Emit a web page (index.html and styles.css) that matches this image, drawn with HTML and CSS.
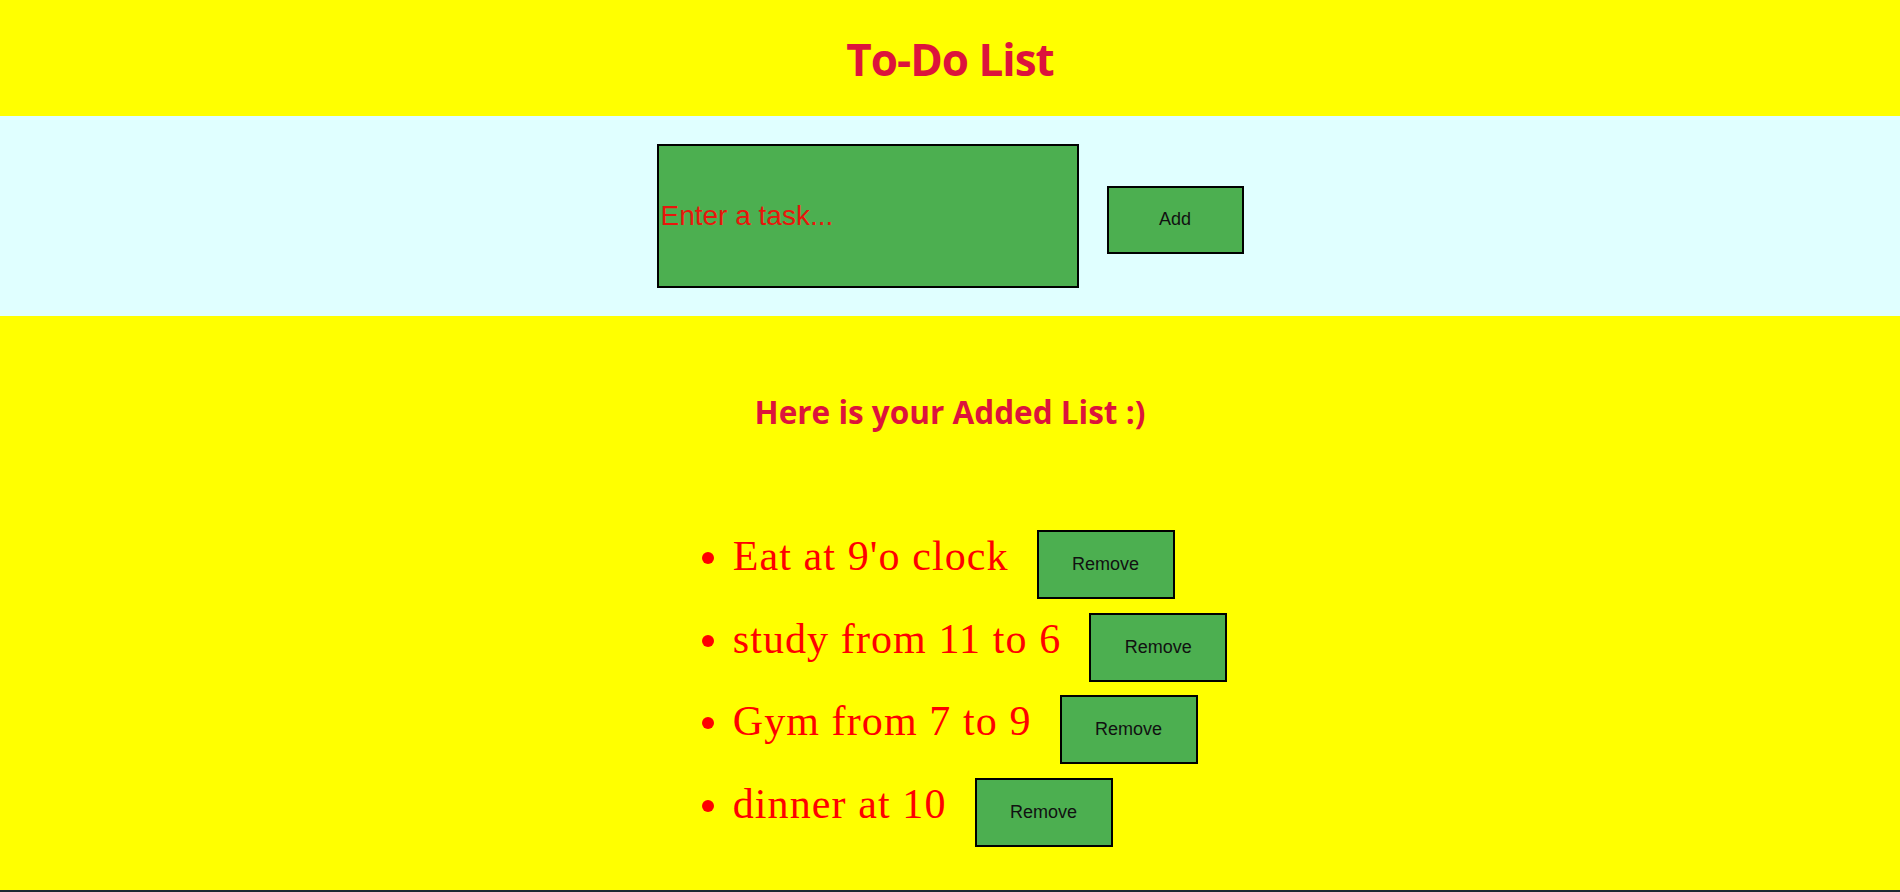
FILE: index.html
```html
<!DOCTYPE html>
<html lang="en">
<head>
<meta charset="utf-8">
<title>To-Do List</title>
<link rel="stylesheet" href="styles.css">
</head>
<body>
<header class="top">
  <h1 class="title">To-Do List</h1>
</header>
<section class="entry">
  <input class="task-input" type="text" placeholder="Enter a task...">
  <button class="btn">Add</button>
</section>
<main class="list-area">
  <h2 class="list-title">Here is your Added List :)</h2>
  <ul class="tasks">
    <li class="task"><span class="task-text">Eat at 9'o clock</span><button class="btn btn-remove">Remove</button></li>
    <li class="task"><span class="task-text">study from 11 to 6</span><button class="btn btn-remove">Remove</button></li>
    <li class="task"><span class="task-text">Gym from 7 to 9</span><button class="btn btn-remove">Remove</button></li>
    <li class="task"><span class="task-text">dinner at 10</span><button class="btn btn-remove">Remove</button></li>
  </ul>
</main>
</body>
</html>
```
FILE: styles.css
```css
html {
  background: #1d2731;
}
body {
  margin: 0;
  height: 890px;
  overflow: hidden;
  font-family: "Liberation Sans", Arial, sans-serif;
}
.top {
  height: 116px;
  background: #ffff00;
  display: flex;
  align-items: center;
  justify-content: center;
}
.title {
  margin: 0;
  font-family: "Open Sans", "Noto Sans", sans-serif;
  font-weight: 700;
  font-size: 44px;
  letter-spacing: -1px;
  color: #dc143c;
  position: relative;
  top: 1px;
}
.entry {
  height: 200px;
  box-sizing: border-box;
  padding: 28px 0;
  background: #e0ffff;
  display: flex;
  justify-content: center;
  align-items: baseline;
  gap: 28px;
}
.task-input {
  width: 422px;
  height: 144px;
  box-sizing: border-box;
  border: 2px solid #000;
  padding: 1px 2px;
  background: #4caf50;
  font-family: "Liberation Sans", Arial, sans-serif;
  font-size: 28px;
  color: #e00;
  outline: none;
}
.task-input::placeholder {
  color: #e8160c;
  opacity: 1;
}
.btn {
  width: 137px;
  height: 68px;
  box-sizing: border-box;
  border: 2px solid #000;
  background: #4caf50;
  font-family: "Liberation Sans", Arial, sans-serif;
  font-size: 18px;
  color: #111;
  padding: 0;
}
.list-area {
  height: 574px;
  background: #ffff00;
  padding-top: 74px;
  box-sizing: border-box;
}
.list-title {
  margin: 0;
  text-align: center;
  font-family: "Open Sans", "Noto Sans", sans-serif;
  font-weight: 700;
  font-size: 31.5px;
  color: #dc143c;
}
.tasks {
  width: fit-content;
  margin: 97px auto 0;
  padding-left: 60px;
  list-style: disc;
  color: #ff0000;
}
.task {
  font-family: "Liberation Serif", Georgia, serif;
  font-size: 42px;
  letter-spacing: 1.1px;
  line-height: 1;
  margin-bottom: 13.5px;
}
.task-text {
  color: #ff0000;
}
.btn-remove {
  width: 138px;
  height: 69px;
  margin-left: 28px;
  letter-spacing: 0;
  vertical-align: baseline;
}
```
